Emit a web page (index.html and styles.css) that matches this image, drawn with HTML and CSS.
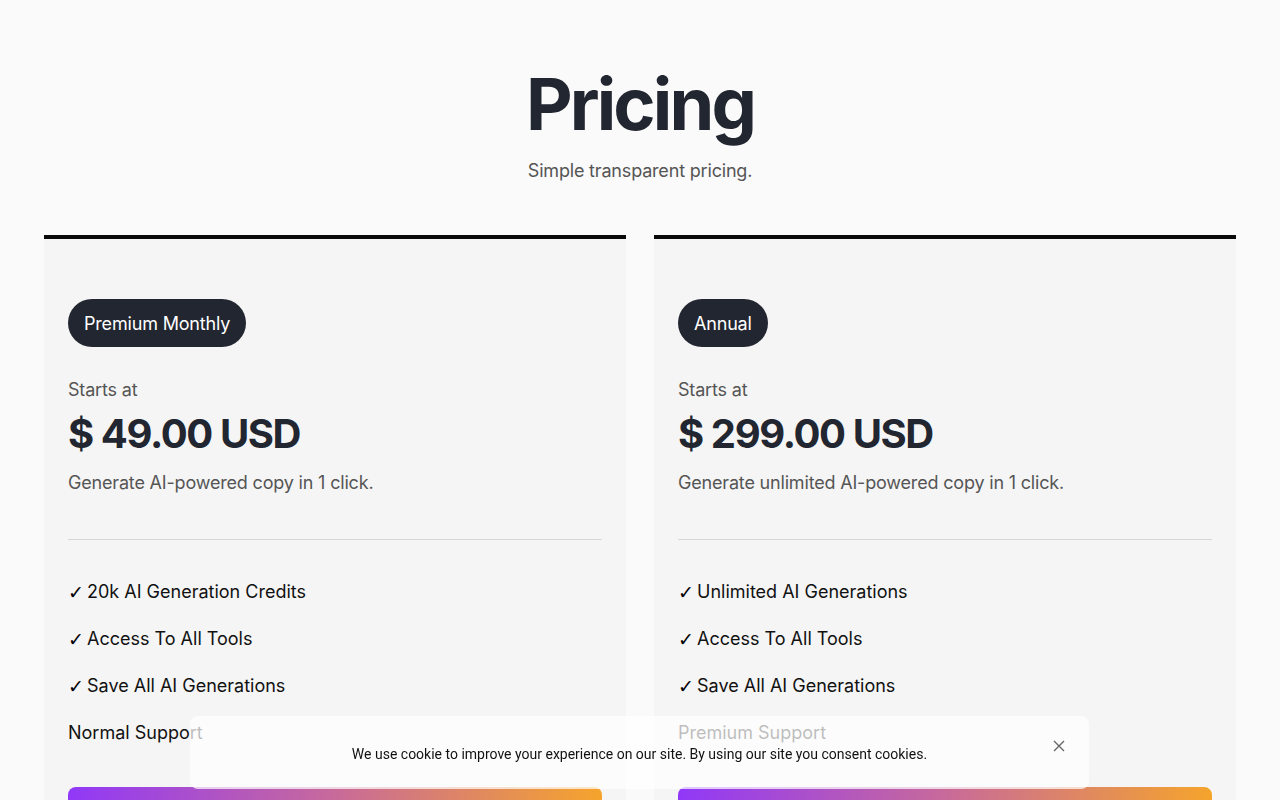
FILE: index.html
```html
<!DOCTYPE html>
<html lang="en">
<head>
<meta charset="utf-8">
<title>Pricing</title>
<link rel="stylesheet" href="styles.css">
</head>
<body>
<main class="page">
  <header class="hero">
    <h1 class="title">Pricing</h1>
    <p class="subtitle">Simple transparent pricing.</p>
  </header>
  <section class="plans">
    <article class="card">
      <span class="badge">Premium Monthly</span>
      <p class="starts">Starts at</p>
      <p class="price">$ 49.00 USD</p>
      <p class="desc">Generate AI-powered copy in 1 click.</p>
      <hr class="divider">
      <ul class="features">
        <li><span class="check">✓</span>20k AI Generation Credits</li>
        <li><span class="check">✓</span>Access To All Tools</li>
        <li><span class="check">✓</span>Save All AI Generations</li>
        <li>Normal Support</li>
      </ul>
      <a class="cta" href="#" aria-label="Get started"></a>
    </article>
    <article class="card">
      <span class="badge">Annual</span>
      <p class="starts">Starts at</p>
      <p class="price">$ 299.00 USD</p>
      <p class="desc">Generate unlimited AI-powered copy in 1 click.</p>
      <hr class="divider">
      <ul class="features">
        <li><span class="check">✓</span>Unlimited AI Generations</li>
        <li><span class="check">✓</span>Access To All Tools</li>
        <li><span class="check">✓</span>Save All AI Generations</li>
        <li>Premium Support</li>
      </ul>
      <a class="cta" href="#" aria-label="Get started"></a>
    </article>
  </section>
</main>
<div class="cookie">
  <p class="cookie-text">We use cookie to improve your experience on our site. By using our site you consent cookies.</p>
  <button class="cookie-close" aria-label="Close">
    <svg width="12" height="12" viewBox="0 0 12 12"><path d="M1 1L11 11M11 1L1 11" stroke="#666" stroke-width="1.4" fill="none"/></svg>
  </button>
</div>
</body>
</html>
```

FILE: styles.css
```css
* { box-sizing: border-box; }
html, body { margin: 0; padding: 0; }
body {
  background: #fafafa;
  font-family: Inter, "Noto Sans", sans-serif;
  color: #111;
  overflow: hidden;
  height: 800px;
}
.page {
  width: 1192px;
  margin: 0 auto;
  padding-top: 68px;
}
.hero { text-align: center; }
.title {
  margin: 0;
  font-size: 72px;
  line-height: 72px;
  font-weight: 700;
  color: #222630;
  letter-spacing: -0.04em;
}
.subtitle {
  margin: 17px 0 0;
  font-size: 18px;
  line-height: 28px;
  color: #555;
  letter-spacing: -0.01em;
}
.plans {
  display: grid;
  grid-template-columns: 1fr 1fr;
  gap: 28px;
  margin-top: 50px;
}
.card {
  background: #f5f5f5;
  border-top: 4px solid #0a0a0a;
  padding: 60px 24px 0;
  display: flex;
  flex-direction: column;
  align-items: flex-start;
  height: 600px;
}
.badge {
  display: inline-block;
  background: #222630;
  color: #fff;
  font-size: 18px;
  line-height: 50px;
  height: 48px;
  padding: 0 16px;
  border-radius: 24px;
  letter-spacing: -0.01em;
}
.starts {
  margin: 29px 0 0;
  font-size: 18px;
  line-height: 28px;
  color: #555;
  letter-spacing: -0.01em;
}
.price {
  margin: 6px 0 0;
  font-size: 40px;
  line-height: 48px;
  font-weight: 700;
  color: #222630;
  letter-spacing: -0.035em;
}
.desc {
  margin: 11px 0 0;
  font-size: 18px;
  line-height: 28px;
  color: #555;
  letter-spacing: -0.01em;
}
.divider {
  align-self: stretch;
  border: 0;
  border-top: 1px solid #d6d6d6;
  margin: 42px 0 0;
  height: 0;
}
.features {
  list-style: none;
  margin: 38px 0 0;
  padding: 0;
  display: flex;
  flex-direction: column;
  gap: 19px;
}
.features li {
  font-size: 18px;
  line-height: 28px;
  height: 28px;
  color: #111;
}
.check {
  display: inline-block;
  width: 19px;
  font-family: "DejaVu Sans", sans-serif;
  font-size: 19px;
  line-height: 28px;
  vertical-align: top;
  font-weight: 700;
  color: #000;
}
.cta {
  align-self: stretch;
  display: block;
  margin-top: 40px;
  height: 48px;
  border-radius: 8px;
  background: linear-gradient(90deg, #9038f8 0%, #c86a9a 50%, #f5a42c 100%);
  text-decoration: none;
}
.cookie {
  position: fixed;
  left: 190px;
  top: 716px;
  width: 899px;
  height: 73px;
  background: rgba(255, 255, 255, 0.72);
  border-radius: 8px;
  display: flex;
  align-items: center;
  justify-content: center;
}
.cookie-text {
  margin: 2px 0 0;
  font-family: Roboto, "Liberation Sans", sans-serif;
  font-size: 14px;
  line-height: 20px;
  color: #111;
}
.cookie-close {
  position: absolute;
  right: 23px;
  top: 23px;
  width: 14px;
  height: 14px;
  padding: 0;
  border: 0;
  background: none;
  display: flex;
  align-items: center;
  justify-content: center;
}
```
